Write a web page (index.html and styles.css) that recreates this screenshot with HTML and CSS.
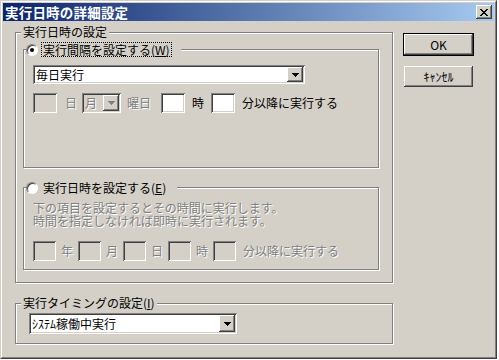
FILE: index.html
```html
<!DOCTYPE html>
<html>
  <head>
    <meta charset="utf-8">
    <title>実行日時の詳細設定</title>
    <link rel="stylesheet" href="styles.css">
  </head>
  <body>
    <div class="window">
      <div class="frame">
        <div class="titlebar">
          <span class="title">実行日時の詳細設定</span>
          <span class="close-btn">
            <svg width="8" height="7" viewBox="0 0 8 7" shape-rendering="crispEdges">
              <path d="M0 0h2v1h1v1h2v-1h1v-1h2v1h-1v1h-1v1h-1v1h1v1h1v1h1v1h-2v-1h-1v-1h-2v1h-1v1h-2v-1h1v-1h1v-1h1v-1h-1v-1h-1v-1h-1z"/>
            </svg>
          </span>
        </div>
        <div class="content">
          <div class="left">
            <fieldset class="group outer-group">
              <legend class="group-label">実行日時の設定</legend>

              <fieldset class="group sub-group">
                <legend class="radio-legend">
                  <span class="radio checked"></span>
                  <span class="radio-text focused">実行間隔を設定する(<u>W</u>)</span>
                </legend>
                <div class="combo interval-combo">
                  <span class="combo-text">毎日実行</span>
                  <span class="arrow-btn">
                    <svg width="7" height="4" viewBox="0 0 7 4" shape-rendering="crispEdges"><path d="M0 0h7v1h-1v1h-1v1h-1v1h-1v-1h-1v-1h-1v-1h-1z"/></svg>
                  </span>
                </div>
                <div class="field-row interval-row">
                  <span class="box off"></span>
                  <span class="dis m-day">日</span>
                  <div class="combo off week-combo">
                    <span class="combo-text dis">月</span>
                    <span class="arrow-btn off">
                      <svg width="7" height="4" viewBox="0 0 7 4" shape-rendering="crispEdges"><path d="M0 0h7v1h-1v1h-1v1h-1v1h-1v-1h-1v-1h-1v-1h-1z"/></svg>
                    </span>
                  </div>
                  <span class="dis m-week">曜日</span>
                  <span class="box m-hourbox"></span>
                  <span class="m-hour">時</span>
                  <span class="box m-minbox"></span>
                  <span class="m-after">分以降に実行する</span>
                </div>
              </fieldset>

              <fieldset class="group sub-group second">
                <legend class="radio-legend">
                  <span class="radio"></span>
                  <span class="radio-text">実行日時を設定する(<u>E</u>)</span>
                </legend>
                <p class="note dis">下の項目を設定するとその時間に実行します。<br>時間を指定しなければ即時に実行されます。</p>
                <div class="field-row date-row">
                  <span class="box off"></span>
                  <span class="dis">年</span>
                  <span class="box off"></span>
                  <span class="dis">月</span>
                  <span class="box off"></span>
                  <span class="dis">日</span>
                  <span class="box off"></span>
                  <span class="dis">時</span>
                  <span class="box off"></span>
                  <span class="dis after">分以降に実行する</span>
                </div>
              </fieldset>
            </fieldset>

            <fieldset class="group timing-group">
              <legend class="group-label">実行タイミングの設定(<u>I</u>)</legend>
              <div class="combo timing-combo">
                <span class="combo-text">ｼｽﾃﾑ稼働中実行</span>
                <span class="arrow-btn">
                  <svg width="7" height="4" viewBox="0 0 7 4" shape-rendering="crispEdges"><path d="M0 0h7v1h-1v1h-1v1h-1v1h-1v-1h-1v-1h-1v-1h-1z"/></svg>
                </span>
              </div>
            </fieldset>
          </div>

          <div class="buttons">
            <div class="default-ring">
              <button class="btn">OK</button>
            </div>
            <button class="btn cancel">ｷｬﾝｾﾙ</button>
          </div>
        </div>
      </div>
    </div>
  </body>
</html>
```

FILE: styles.css
```css
html {
  background: #fff;
}
body {
  margin: 0;
  font-family: "Noto Sans CJK JP", "Noto Sans", sans-serif;
  font-size: 12px;
  line-height: 14px;
  color: #000;
}

/* window chrome */
.window {
  width: 497px;
  height: 359px;
  box-sizing: border-box;
  border: 1px solid;
  border-color: #d4d0c8 #404040 #404040 #d4d0c8;
  background: #d4d0c8;
}
.frame {
  height: 100%;
  box-sizing: border-box;
  border: 1px solid;
  border-color: #fff #808080 #808080 #fff;
  padding: 1px;
}
.titlebar {
  height: 18px;
  display: flex;
  align-items: center;
  justify-content: space-between;
  padding: 0 2px 0 2px;
  background: linear-gradient(to right, #0a246a, #a6caf0);
}
.title {
  color: #fff;
  font-weight: bold;
  font-size: 13.5px;
  line-height: 18px;
  letter-spacing: 0.2px;
}
.close-btn {
  width: 16px;
  height: 14px;
  display: flex;
  align-items: center;
  justify-content: center;
  background: #d4d0c8;
  box-shadow: inset -1px -1px #404040, inset 1px 1px #fff, inset -2px -2px #808080;
}

/* layout */
.content {
  display: flex;
  padding: 4px 0 0 12px;
}
.left {
  width: 378px;
}
.buttons {
  margin-left: 10px;
  padding-top: 8px;
  display: flex;
  flex-direction: column;
}

/* group boxes */
.group {
  margin: 0;
  min-width: 0;
  border: 1px solid #808080;
  box-shadow: inset 1px 1px #fff, 1px 1px #fff;
}
.group-label {
  padding: 0 2px;
  margin-left: -2px;
  background: #d4d0c8;
}
.outer-group {
  padding: 3px 13px 12px 7px;
}
.sub-group {
  padding: 8px 10px 54px 9px;
}
.sub-group.second {
  margin-top: 12px;
  padding: 6px 10px 8px 9px;
}
.timing-group {
  margin-top: 13px;
  padding: 3px 10px 9px 13px;
}
.timing-group .group-label {
  margin-left: -8px;
}

/* radio legends */
.radio-legend {
  display: flex;
  align-items: center;
  margin-left: -7px;
  padding: 0 9px 0 0;
  background: #d4d0c8;
}
.radio {
  width: 12px;
  height: 12px;
  box-sizing: border-box;
  border-radius: 50%;
  border: 1px solid;
  border-color: #808080 #fff #fff #808080;
  box-shadow: inset 1px 1px #404040;
  background: #fff;
  display: flex;
  align-items: center;
  justify-content: center;
  margin-right: 3px;
}
.radio.checked::after {
  content: "";
  width: 4px;
  height: 4px;
  border-radius: 50%;
  background: #000;
}
.radio-text {
  line-height: 13px;
  padding: 0 1px;
  border: 1px solid transparent;
}
.radio-text.focused {
  border: 1px dotted #000;
}
u {
  text-underline-offset: 1px;
}

/* combo boxes */
.combo {
  display: flex;
  align-items: center;
  justify-content: space-between;
  box-sizing: border-box;
  padding: 2px;
  background: #fff;
  box-shadow: inset 1px 1px #808080, inset -1px -1px #fff, inset 2px 2px #404040, inset -2px -2px #d4d0c8;
}
.combo.off {
  background: #d4d0c8;
}
.combo-text {
  padding-left: 1px;
}
.arrow-btn {
  width: 16px;
  align-self: stretch;
  display: flex;
  align-items: center;
  justify-content: center;
  background: #d4d0c8;
  box-shadow: inset -1px -1px #404040, inset 1px 1px #fff, inset -2px -2px #808080, inset 2px 2px #d4d0c8;
}
.arrow-btn.off path {
  fill: #808080;
}
.interval-combo {
  width: 272px;
  height: 19px;
}
.week-combo {
  width: 39px;
  height: 20px;
}
.timing-combo {
  width: 208px;
  height: 21px;
}

/* input rows */
.field-row {
  display: flex;
  align-items: center;
}
.box {
  width: 24px;
  height: 20px;
  box-sizing: border-box;
  background: #fff;
  box-shadow: inset 1px 1px #808080, inset -1px -1px #fff, inset 2px 2px #404040, inset -2px -2px #d4d0c8;
}
.box.off {
  background: #d4d0c8;
}
.dis {
  color: #808080;
  text-shadow: 1px 1px 0 #fff;
}
.interval-row {
  margin-top: 9px;
}
.m-day {
  margin-left: 8px;
}
.week-combo {
  margin-left: 5px;
}
.m-week {
  margin-left: 6px;
}
.m-hourbox {
  margin-left: 10px;
}
.m-hour,
.m-minbox,
.m-after {
  margin-left: 7px;
}

.note {
  margin: 0;
  line-height: 13px;
}
.date-row {
  margin-top: 14px;
  gap: 5px;
}
.date-row .box {
  width: 23px;
}
.date-row .after {
  margin-left: 2px;
}

/* buttons */
.btn {
  width: 69px;
  height: 21px;
  padding: 0;
  border: none;
  font-family: "Noto Sans CJK JP", "Noto Sans", sans-serif;
  font-size: 12px;
  color: #000;
  background: #d4d0c8;
  box-shadow: inset -1px -1px #404040, inset 1px 1px #fff, inset -2px -2px #808080, inset 2px 2px #d4d0c8;
}
.default-ring {
  width: 71px;
  height: 23px;
  box-sizing: border-box;
  border: 1px solid #000;
}
.default-ring .btn {
  display: block;
}
.cancel {
  margin: 10px 0 0 1px;
}
```
